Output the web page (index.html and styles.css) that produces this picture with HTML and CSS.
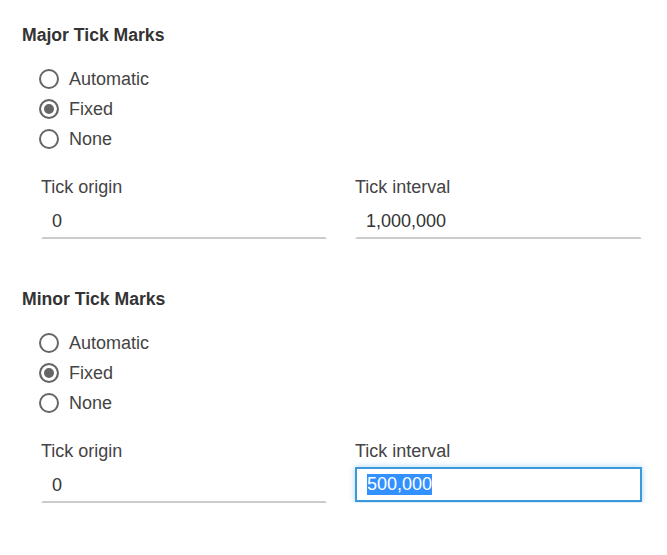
FILE: index.html
```html
<!DOCTYPE html>
<html lang="en">
<head>
<meta charset="utf-8">
<title>Tick Marks</title>
<link rel="stylesheet" href="styles.css">
</head>
<body>
<div class="panel">
  <section class="section">
    <h2 class="heading">Major Tick Marks</h2>
    <div class="radios">
      <label class="radio"><input type="radio" name="major"><span>Automatic</span></label>
      <label class="radio"><input type="radio" name="major" checked><span>Fixed</span></label>
      <label class="radio"><input type="radio" name="major"><span>None</span></label>
    </div>
    <div class="fields">
      <div class="field">
        <label class="field-label">Tick origin</label>
        <input class="text-input" type="text" value="0">
      </div>
      <div class="field">
        <label class="field-label">Tick interval</label>
        <input class="text-input" type="text" value="1,000,000">
      </div>
    </div>
  </section>
  <section class="section">
    <h2 class="heading">Minor Tick Marks</h2>
    <div class="radios">
      <label class="radio"><input type="radio" name="minor"><span>Automatic</span></label>
      <label class="radio"><input type="radio" name="minor" checked><span>Fixed</span></label>
      <label class="radio"><input type="radio" name="minor"><span>None</span></label>
    </div>
    <div class="fields">
      <div class="field">
        <label class="field-label">Tick origin</label>
        <input class="text-input" type="text" value="0">
      </div>
      <div class="field">
        <label class="field-label">Tick interval</label>
        <div class="text-input focused"><span class="selected">500,000</span></div>
      </div>
    </div>
  </section>
</div>
</body>
</html>
```

FILE: styles.css
```css
html, body {
  margin: 0;
  padding: 0;
  background: #fff;
}

body {
  font-family: "Liberation Sans", Arial, sans-serif;
  color: #333;
}

.panel {
  padding: 24px 24px 0 22px;
}

.section + .section {
  margin-top: 49px;
}

.heading {
  margin: 0;
  font-size: 17.6px;
  line-height: 22px;
  font-weight: bold;
  color: #333;
}

.radios {
  margin-top: 18px;
  padding-left: 17px;
  display: flex;
  flex-direction: column;
}

.radio {
  display: flex;
  align-items: center;
  height: 30px;
  font-size: 18px;
  color: #444;
  gap: 10px;
}

.radio input {
  appearance: none;
  -webkit-appearance: none;
  margin: 0;
  width: 20px;
  height: 20px;
  border: 2px solid #666;
  border-radius: 50%;
  background: #fff;
  box-sizing: border-box;
}

.radio input:checked {
  background: #666;
  box-shadow: inset 0 0 0 3px #fff;
}

.fields {
  margin-top: 22px;
  margin-left: 19px;
  display: grid;
  grid-template-columns: 286px 287px;
  column-gap: 28px;
}

.field {
  display: flex;
  flex-direction: column;
}

.field-label {
  font-size: 18px;
  line-height: 22px;
  color: #444;
}

.text-input {
  margin-top: 5px;
  box-sizing: border-box;
  width: 100%;
  height: 36px;
  padding: 1px 10px 0 9px;
  border: 2px solid transparent;
  border-bottom-color: #ccc;
  font-family: "Liberation Sans", Arial, sans-serif;
  font-size: 18px;
  color: #333;
  background: #fff;
  outline: none;
  display: flex;
  align-items: center;
}

.text-input.focused {
  height: 35px;
  padding: 0 10px;
  border-color: #3a98db;
  box-shadow: 0 0 6px rgba(58, 152, 219, 0.45);
}

.selected {
  background: #3390ff;
  color: #fff;
  line-height: 21px;
}
```
